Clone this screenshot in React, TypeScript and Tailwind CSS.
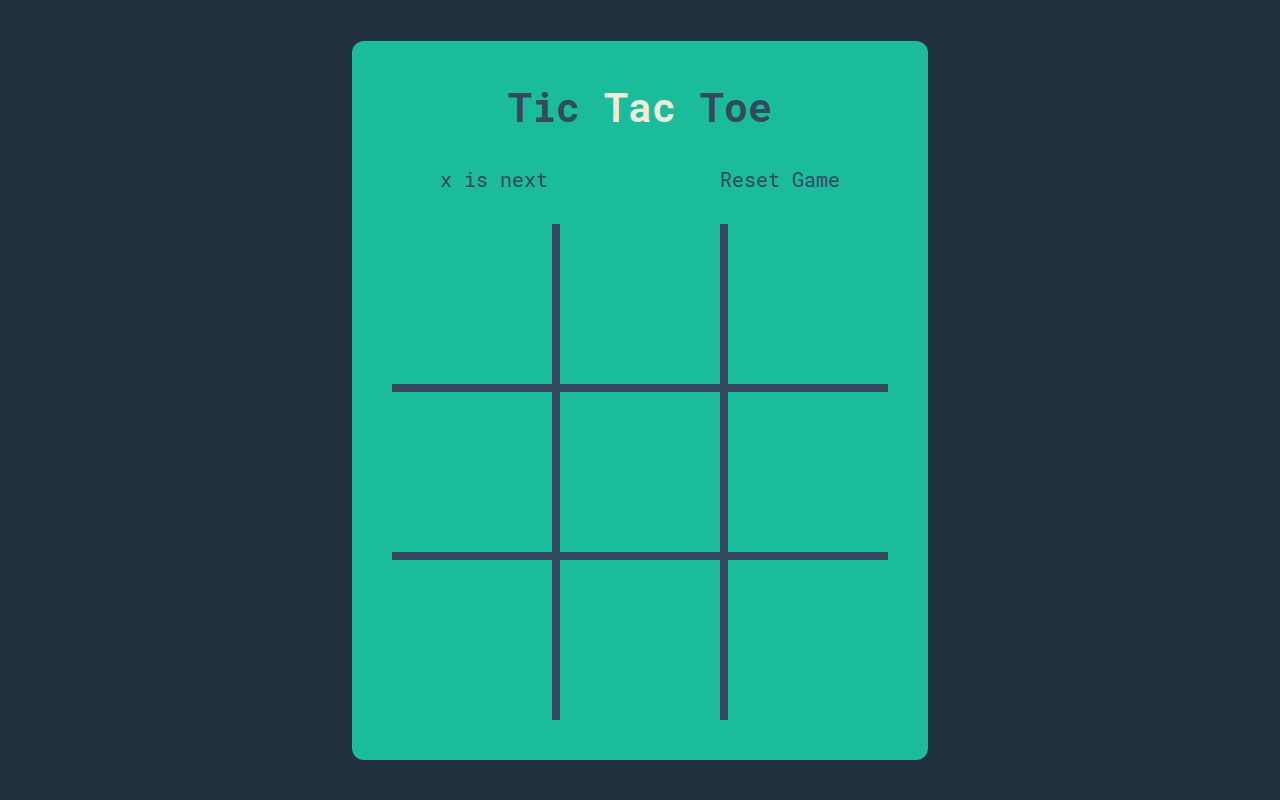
import React from "react";

export default function App() {
  const cells = Array.from({ length: 9 });
  return (
    <div
      className="min-h-screen w-full flex items-center justify-center bg-[#22313f]"
      style={{ fontFamily: '"Roboto Mono", "DejaVu Sans Mono", "Liberation Mono", monospace' }}
    >
      <div className="w-[576px] bg-[#1abc9c] rounded-xl px-10 pt-[38px] pb-10 flex flex-col">
        <h1 className="text-center text-[40px] leading-[56px] font-extrabold text-[#34495e]">
          Tic <span className="text-[#f0ebd8]">Tac</span> Toe
        </h1>
        <div className="mt-[30px] flex justify-between px-12 text-[20px] leading-[28px] font-normal text-[#34495e]">
          <span>x is next</span>
          <button className="text-[#34495e]">Reset Game</button>
        </div>
        <div className="mt-[31px] grid grid-cols-3 gap-2 bg-[#34495e] w-[496px] h-[496px]">
          {cells.map((_, i) => (
            <div key={i} className="bg-[#1abc9c]" />
          ))}
        </div>
      </div>
    </div>
  );
}
